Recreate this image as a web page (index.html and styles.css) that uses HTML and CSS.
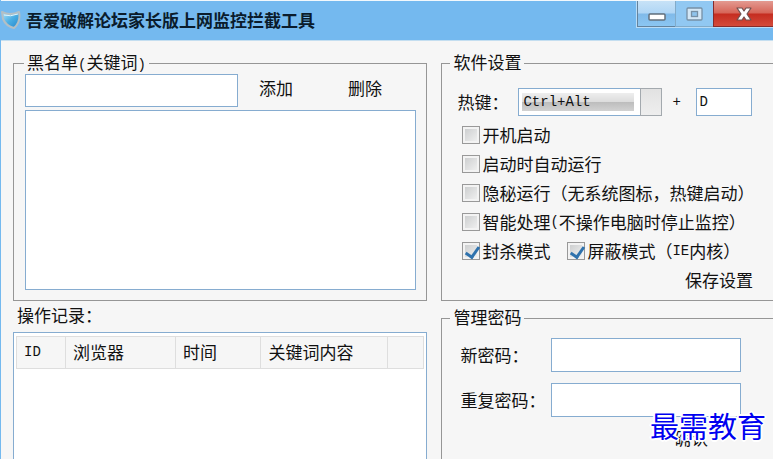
FILE: index.html
```
<!DOCTYPE html>
<html lang="zh-CN">
<head>
  <meta charset="UTF-8">
  <meta name="viewport" content="width=device-width, initial-scale=1.0">
  <title>吾爱破解论坛家长版上网监控拦截工具</title>
  <link rel="stylesheet" href="styles.css">
</head>
<body>
  <header class="titlebar">
    <svg class="logo" width="20" height="20" viewBox="0 0 20 20">
      <defs>
        <linearGradient id="shield" x1="0" y1="0" x2="1" y2="1">
          <stop offset="0" stop-color="#b4e6fa"/>
          <stop offset="0.5" stop-color="#4aaee4"/>
          <stop offset="1" stop-color="#2387cc"/>
        </linearGradient>
      </defs>
      <path d="M1 2 Q5 4 9 4 Q14 4 18 2 Q20 12 13 18 Q5 16 2 9 Z" fill="url(#shield)" stroke="#b3bfc5" stroke-width="2" stroke-linejoin="round"/>
      <path d="M3 5 Q9 7 17 4" fill="none" stroke="#e2f5fc" stroke-width="1"/>
    </svg>
    <h1>吾爱破解论坛家长版上网监控拦截工具</h1>
    <div class="window-buttons">
      <button type="button" class="minimize" aria-label="最小化">
        <svg width="18" height="8" viewBox="0 0 18 8"><rect x="1" y="1" width="16" height="6" rx="1" fill="#fff" stroke="#64707c" stroke-width="1.5"/></svg>
      </button>
      <button type="button" class="maximize" aria-label="最大化">
        <svg width="17" height="14" viewBox="0 0 17 14"><rect x="1" y="1" width="15" height="12" rx="1" fill="#d3e7f6" stroke="#7790a5" stroke-width="1.3"/><rect x="5.5" y="4.5" width="6" height="5" fill="#8fc4ec" stroke="#7790a5" stroke-width="1.3"/></svg>
      </button>
      <button type="button" class="close" aria-label="关闭">
        <svg width="16" height="14" viewBox="0 0 16 14"><path d="M1 1H6L8 4L10 1H15L11 7L15 13H10L8 10L6 13H1L5 7Z" fill="#fff" stroke="#70504f" stroke-width="1.2" stroke-linejoin="round"/></svg>
      </button>
    </div>
  </header>

  <main class="content">
    <div class="column">
      <fieldset class="group blacklist">
        <legend>黑名单<span class="latin">(</span>关键词<span class="latin">)</span></legend>
        <div class="add-row">
          <input type="text" class="keyword" aria-label="关键词">
          <button type="button">添加</button>
          <button type="button">删除</button>
        </div>
        <select class="keyword-list" size="8" aria-label="黑名单"></select>
      </fieldset>

      <h2>操作记录：</h2>
      <div class="records">
        <table>
          <thead>
            <tr>
              <th class="col-id">ID</th>
              <th class="col-browser">浏览器</th>
              <th class="col-time">时间</th>
              <th class="col-content">关键词内容</th>
              <th></th>
            </tr>
          </thead>
        </table>
      </div>
    </div>

    <div class="column">
      <fieldset class="group settings">
        <legend>软件设置</legend>
        <div class="hotkey">
          <label for="modifier">热键：</label>
          <div class="combo">
            <select id="modifier">
              <option>Ctrl+Alt</option>
            </select>
            <span class="combo-arrow"></span>
          </div>
          <span class="plus">+</span>
          <input type="text" class="key" value="D" aria-label="按键">
        </div>
        <div class="checks">
          <div><label><input type="checkbox">开机启动</label></div>
          <div><label><input type="checkbox">启动时自动运行</label></div>
          <div><label><input type="checkbox">隐秘运行（无系统图标，热键启动）</label></div>
          <div><label><input type="checkbox">智能处理<span class="latin">(</span>不操作电脑时停止监控）</label></div>
          <div>
            <label><input type="checkbox" checked>封杀模式</label>
            <label><input type="checkbox" checked>屏蔽模式（<span class="latin">IE</span>内核）</label>
          </div>
        </div>
        <button type="button" class="save">保存设置</button>
      </fieldset>

      <fieldset class="group password">
        <legend>管理密码</legend>
        <div class="field">
          <label for="pass">新密码：</label>
          <input type="password" id="pass">
        </div>
        <div class="field">
          <label for="pass2">重复密码：</label>
          <input type="password" id="pass2">
        </div>
        <button type="button" class="confirm">确认</button>
      </fieldset>
    </div>
  </main>

  <div class="watermark">最需教育</div>
</body>
</html>
```

FILE: styles.css
```
* { box-sizing: border-box; }
body {
  position: relative;
  display: flex;
  flex-direction: column;
  height: 100vh;
  margin: 0;
  overflow: hidden;
  background: #f6f6f6;
  border-left: 1px solid #74b9ef;
  color: #111;
  font: 17px/20px "Noto Sans CJK SC", sans-serif;
}
button, input, select { font: inherit; color: inherit; margin: 0; padding: 0; border-radius: 0; }
button { background: none; border: none; cursor: pointer; }
input[type="text"], input[type="password"] { background: #fff; border: 1px solid #86acd0; }
.latin { font-family: "Liberation Mono", monospace; font-size: 14px; }

/* title bar */
.titlebar {
  display: flex;
  align-items: flex-start;
  height: 41px;
  flex: none;
  background: #74b9ef;
  border-top: 1px solid #f2f8fc;
  border-bottom: 1px solid #c4def0;
}
.logo { margin-top: 9px; }
h1 { margin: 9px 0 0 5px; font-size: 17px; line-height: 20px; font-weight: bold; color: #0a1c2c; }
.window-buttons {
  display: flex;
  margin-left: auto;
  border: 1px solid #b9dcf6;
  border-top: none;
  border-right: none;
}
.window-buttons button {
  display: flex;
  align-items: center;
  justify-content: center;
  width: 38px;
  height: 26px;
  border: 1px solid #64839d;
  border-top: none;
  border-right: none;
  background: linear-gradient(#c7e2f7, #b0d6f5 48%, #80bae9 52%, #8bc6f2);
}
.window-buttons .maximize { background: #91c8f2; border-color: #82abc9; }
.window-buttons .close { width: 60px; background: linear-gradient(#e39a91, #d66558 48%, #c52c20 52%, #d44a3a); border-color: #862b2b; }
.minimize svg { margin-top: 6px; }

.content {
  flex: 1;
  display: grid;
  grid-template-columns: 5fr 4fr;
  gap: 14px;
  padding: 12px 0 0 12px;
}
.column { display: flex; flex-direction: column; min-width: 0; }
.group { margin: 0; min-width: 0; border: 1px solid #969696; }
legend { margin: 0; padding: 0 3px; height: 20px; line-height: 18px; }

/* left side */
.blacklist { height: 248px; padding: 1px 10px 10px 11px; display: flex; flex-direction: column; }
.blacklist legend { margin-left: -1px; }
.add-row { display: flex; align-items: flex-start; margin-bottom: 3px; }
.add-row button { height: 28px; margin-left: 21px; }
.add-row button + button { margin-left: 55px; }
.keyword { width: 213px; height: 33px; }
.keyword-list { width: 100%; height: 180px; background: #fff; border: 1px solid #86acd0; }
h2 { margin: 4px 0 7px 4px; font-size: 17px; line-height: 20px; font-weight: normal; }
.records { flex: 1; padding: 3px 2px 0; background: #fff; border: 1px solid #86acd0; border-bottom: none; }
table { width: 100%; table-layout: fixed; border-collapse: collapse; }
th { height: 32px; padding: 0 0 2px 7px; background: #f6f6f6; border: 1px solid #dedede; font-weight: normal; text-align: left; }
.col-id { width: 12%; font: 14px "Liberation Mono", monospace; }
.col-browser { width: 27%; }
.col-time { width: 21%; }
.col-content { width: 31%; }

/* right side */
.settings, .password { border-right: none; }
.settings { height: 248px; padding: 15px 20px 0 15px; }
.settings legend { margin-left: -7px; }
.hotkey { display: flex; align-items: center; }
.hotkey label { width: 61px; }
.combo { position: relative; width: 144px; height: 28px; }
.combo select {
  appearance: none;
  width: 100%;
  height: 28px;
  padding-left: 4px;
  border: 1px solid #86acd0;
  background: linear-gradient(#eee, #dcdcdc 50%, #bdbdbd 52%, #d2d2d2) 3px 4px / 112px 18px no-repeat #fff;
  font: 14px "Liberation Mono", monospace;
}
.combo-arrow { position: absolute; top: 0; right: 0; width: 22px; height: 28px; border: 1px solid #a3a9ae; background: linear-gradient(#e2e2e2, #eee); pointer-events: none; }
.plus { width: 34px; padding-left: 10px; font: 14px "Liberation Mono", monospace; }
.hotkey .key { width: 56px; height: 28px; padding-left: 2px; font: 14px "Liberation Mono", monospace; }
.checks { margin: 4px 0 0 5px; }
.checks div { display: flex; gap: 17px; height: 29px; align-items: center; white-space: nowrap; }
.checks label { display: flex; align-items: center; }
.checks input {
  appearance: none;
  flex: none;
  width: 18px;
  height: 18px;
  margin-right: 2px;
  border: 1px solid #999;
  box-shadow: inset 0 0 0 2px #f3f3f3;
  background: linear-gradient(135deg, #c8cacb, #f4f4f4);
}
.checks input:checked::before {
  content: "";
  display: block;
  width: 6px;
  height: 11px;
  margin: 1px 0 0 5px;
  border: solid #2f72ad;
  border-width: 0 3px 3px 0;
  transform: rotate(35deg);
}
.save { display: block; margin: 5px 0 0 auto; }
.password { flex: 1; margin-top: 7px; padding: 10px 32px 0 18px; border-bottom: none; }
.password legend { margin-left: -10px; }
.field { display: flex; align-items: center; margin-bottom: 11px; }
.field label { width: 91px; white-space: nowrap; }
.field input { flex: 1; min-width: 0; height: 34px; }
.confirm { display: block; margin: 4px 33px 0 auto; }

.watermark {
  position: absolute;
  right: 7px;
  bottom: 16px;
  font-size: 29px;
  line-height: 36px;
  color: #0000f0;
  text-shadow: -1px -1px #fff, 1px -1px #fff, -1px 1px #fff, 1px 1px #fff, 0 2px #fff, 0 -2px #fff, 2px 0 #fff, -2px 0 #fff;
}
```
